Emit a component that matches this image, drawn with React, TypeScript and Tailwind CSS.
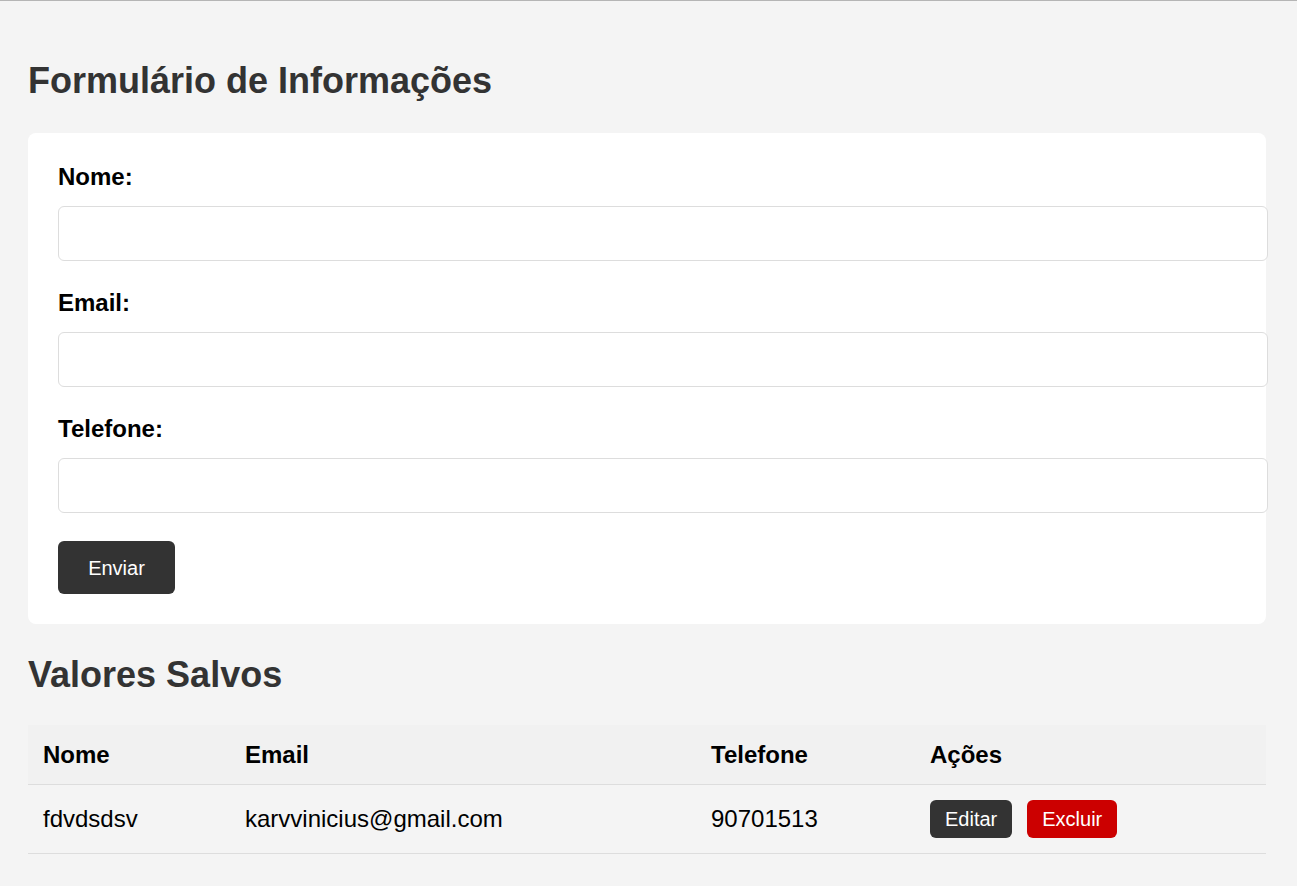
import React, { useState } from 'react';

type Registro = { nome: string; email: string; telefone: string };

const font = { fontFamily: '"Liberation Sans", Arial, sans-serif' };

export default function App() {
  const [nome, setNome] = useState('');
  const [email, setEmail] = useState('');
  const [telefone, setTelefone] = useState('');
  const [registros, setRegistros] = useState<Registro[]>([
    { nome: 'fdvdsdsv', email: 'karvvinicius@gmail.com', telefone: '90701513' },
  ]);

  const enviar = (e: React.FormEvent) => {
    e.preventDefault();
    setRegistros([...registros, { nome, email, telefone }]);
    setNome('');
    setEmail('');
    setTelefone('');
  };

  const campos = [
    { label: 'Nome:', value: nome, set: setNome },
    { label: 'Email:', value: email, set: setEmail },
    { label: 'Telefone:', value: telefone, set: setTelefone },
  ];

  return (
    <div
      className="min-h-screen bg-[#f4f4f4] border-t border-[#b5b5b5] px-[28px] pb-10 text-black"
      style={font}
    >
      <h1 className="mt-[59px] h-[41px] text-[36px] leading-[41px] font-bold text-[#333]">
        Formulário de Informações
      </h1>

      <form
        onSubmit={enviar}
        className="mt-[32px] w-[1238px] bg-white rounded-[8px] p-[30px]"
      >
        {campos.map((c) => (
          <div key={c.label} className="mb-[28px]">
            <label className="block h-[28px] mb-[15px] text-[24px] leading-[28px] font-bold">
              {c.label}
            </label>
            <input
              type="text"
              value={c.value}
              onChange={(e) => c.set(e.target.value)}
              className="block w-[1210px] h-[55px] px-[15px] text-[20px] border border-[#dddddd] rounded-[6px] bg-white outline-none"
            />
          </div>
        ))}
        <button
          type="submit"
          className="w-[117px] h-[53px] bg-[#333] text-white text-[20px] rounded-[6px]"
        >
          Enviar
        </button>
      </form>

      <h2 className="mt-[30px] h-[41px] text-[36px] leading-[41px] font-bold text-[#333]">
        Valores Salvos
      </h2>

      <table className="mt-[30px] w-[1238px] border-collapse table-fixed text-[24px]">
        <thead>
          <tr className="bg-[#f1f1f1] border-b border-[#dddddd]">
            <th className="w-[202px] px-[15px] py-[15px] leading-[29px] text-left font-bold">Nome</th>
            <th className="w-[466px] px-[15px] py-[15px] leading-[29px] text-left font-bold">Email</th>
            <th className="w-[219px] px-[15px] py-[15px] leading-[29px] text-left font-bold">Telefone</th>
            <th className="px-[15px] py-[15px] leading-[29px] text-left font-bold">Ações</th>
          </tr>
        </thead>
        <tbody>
          {registros.map((r, i) => (
            <tr key={i} className="border-b border-[#dddddd]">
              <td className="px-[15px] py-[15px] leading-[28px] align-middle">{r.nome}</td>
              <td className="px-[15px] py-[15px] leading-[28px] align-middle">{r.email}</td>
              <td className="px-[15px] py-[15px] leading-[28px] align-middle">{r.telefone}</td>
              <td className="px-[15px] py-[15px] align-middle">
                <div className="flex items-center gap-[15px]">
                  <button className="h-[38px] px-[15px] bg-[#333] text-white text-[20px] rounded-[6px]">
                    Editar
                  </button>
                  <button
                    onClick={() => setRegistros(registros.filter((_, j) => j !== i))}
                    className="h-[38px] px-[15px] bg-[#cc0000] text-white text-[20px] rounded-[6px]"
                  >
                    Excluir
                  </button>
                </div>
              </td>
            </tr>
          ))}
        </tbody>
      </table>
    </div>
  );
}
